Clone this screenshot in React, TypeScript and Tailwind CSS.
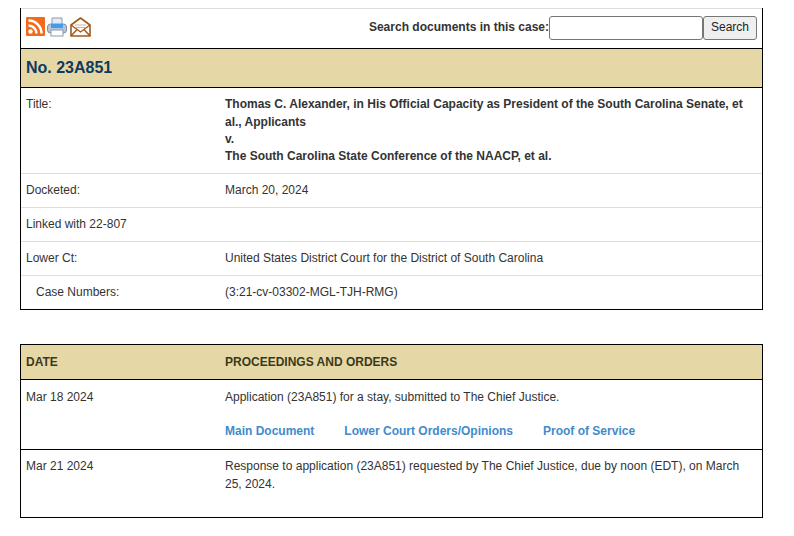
export default function App() {
  const label = "w-[199px] shrink-0";
  const row = "flex px-[5px] py-[8px] border-b border-[#ddd] leading-[17px]";
  return (
    <div className="pt-2 pl-5 w-[763px] text-[12px] leading-[17.14px] text-[#333]" style={{ fontFamily: '"Liberation Sans", Arial, sans-serif' }}>
      <div className="border-x border-b border-black border-t-0">
        <div className="h-[40px] border-t border-[#ddd] flex items-center justify-between px-[5px]">
          <div className="flex items-center gap-[2px] -mt-[4px]">
            <svg width="19" height="19" viewBox="0 0 19 19">
              <rect width="19" height="19" rx="1" fill="#f26b1d" />
              <circle cx="4.500" cy="14.500" r="2.200" fill="#fff" />
              <path d="M2.500 8.500a8 8 0 0 1 8 8" stroke="#fff" strokeWidth="2.400" fill="none" />
              <path d="M2.500 3.500a13 13 0 0 1 13 13" stroke="#fff" strokeWidth="2.400" fill="none" />
            </svg>
            <svg width="20" height="20" viewBox="0 0 20 20">
              <path d="M5 8V1h10v7" fill="#e6ebf2" stroke="#8e9bb0" />
              <rect x="0.500" y="7" width="19" height="9" rx="3" fill="#b9c4d6" stroke="#7f8ea6" />
              <rect x="4" y="7" width="12" height="4" fill="#3f9df0" />
              <rect x="4" y="13" width="12" height="6" fill="#fff" stroke="#8e9bb0" />
            </svg>
            <svg width="21" height="20" viewBox="0 0 21 20" className="ml-[1px]">
              <path d="M1 8 10.500 1 20 8v11H1z" fill="#fff" stroke="#a3591a" strokeWidth="1.600" strokeLinejoin="round" />
              <path d="M1 8l9.500 7L20 8M1 19l6.500-7M20 19l-6.500-7" fill="none" stroke="#a3591a" strokeWidth="1.400" />
              <path d="M5 8h11M6 10.500h9" stroke="#d9b48c" strokeWidth="1" />
            </svg>
          </div>
          <div className="flex items-center -mt-[1px]">
            <span className="font-bold">Search documents in this case:</span>
            <input className="w-[154px] h-[24px] bg-white border border-[#767676] rounded-[3px]" />
            <button className="w-[54px] h-[24px] bg-[#efefef] border border-[#767676] rounded-[3px] text-[#222] text-[12px]">Search</button>
          </div>
        </div>
        <div className="h-[40px] border-y border-black bg-[#e6d8a6] flex items-center px-[5px] text-[16px] font-bold text-[#0f3a5f]">No. 23A851</div>
        <div className="flex px-[5px] pt-[8.400px] pb-[8.040px] border-b border-[#ddd]">
          <div className={label}>Title:</div>
          <div className="font-bold">
            Thomas C. Alexander, in His Official Capacity as President of the South Carolina Senate, et al., Applicants
            <br />v.<br />
            The South Carolina State Conference of the NAACP, et al.
          </div>
        </div>
        <div className={row}><div className={label}>Docketed:</div><div>March 20, 2024</div></div>
        <div className={row}><div className={label}>Linked with 22-807</div></div>
        <div className={row}><div className={label}>Lower Ct:</div><div>United States District Court for the District of South Carolina</div></div>
        <div className="flex px-[5px] py-[8px] leading-[17px]"><div className={label + " pl-[10px]"}>Case Numbers:</div><div>(3:21-cv-03302-MGL-TJH-RMG)</div></div>
      </div>
      <div className="mt-[34px] border border-black">
        <div className="h-[35px] pt-[2px] border-b border-black bg-[#e6d8a6] flex items-center px-[5px] font-bold text-[#3a3a1a]">
          <div className={label}>DATE</div><div>PROCEEDINGS AND ORDERS</div>
        </div>
        <div className="flex px-[5px] pt-[9px] border-b border-black h-[70px]">
          <div className={label}>Mar 18 2024</div>
          <div>
            <div>Application (23A851) for a stay, submitted to The Chief Justice.</div>
            <div className="flex gap-[30px] mt-[17px] font-bold text-[#428bca]"><a>Main Document</a><a>Lower Court Orders/Opinions</a><a>Proof of Service</a></div>
          </div>
        </div>
        <div className="flex px-[5px] pt-[8.400px] h-[67px]">
          <div className={label}>Mar 21 2024</div>
          <div>Response to application (23A851) requested by The Chief Justice, due by noon (EDT), on March 25, 2024.</div>
        </div>
      </div>
    </div>
  );
}
